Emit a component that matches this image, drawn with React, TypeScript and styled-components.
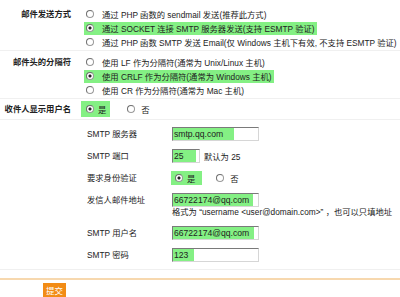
import styled, { createGlobalStyle } from "styled-components";

const GlobalStyle = createGlobalStyle`
  body {
    margin: 0;
    background: #ffffff;
    font-family: "Liberation Sans", "Noto Sans CJK SC", sans-serif;
    font-size: 8.3px;
    color: #222222;
  }
`;

const MARK = "#84f084";

const Page = styled.div`
  width: 400px;
  height: 297px;
  overflow: hidden;
`;

const Row = styled.div<{ $pad: string }>`
  display: grid;
  grid-template-columns: 84px 1fr;
  padding: ${(p) => p.$pad};
  border-bottom: 1px solid #f0f0f0;
`;

const Label = styled.div<{ $center?: boolean }>`
  font-weight: bold;
  text-align: right;
  padding-right: 13px;
  line-height: 14px;
  white-space: nowrap;
  align-self: ${(p) => (p.$center ? "center" : "start")};
`;

const OptionList = styled.div`
  display: flex;
  flex-direction: column;
`;

const Option = styled.div`
  display: flex;
  align-items: center;
  height: 14px;
  white-space: nowrap;
`;

const OptionBody = styled.span<{ $mark?: boolean }>`
  display: inline-flex;
  align-items: center;
  gap: 8px;
  height: 13px;
  padding: 0 2px;
  background: ${(p) => (p.$mark ? MARK : "transparent")};
`;

const Radio = styled.span<{ $on?: boolean }>`
  flex: none;
  width: 6px;
  height: 6px;
  border-radius: 50%;
  border: 1px solid #9a9a9a;
  border-top-color: #6f6f6f;
  border-left-color: #6f6f6f;
  background: ${(p) =>
    p.$on ? "radial-gradient(circle, #222 0 1.3px, #fff 1.8px)" : "#fff"};
`;

const YesNo = styled.div<{ $gap: number; $shift: number }>`
  display: flex;
  align-items: center;
  gap: ${(p) => p.$gap}px;
  margin-left: ${(p) => p.$shift}px;
  white-space: nowrap;
`;

const YesBox = styled.span<{ $pad: string; $h: number }>`
  display: inline-flex;
  align-items: center;
  gap: 4px;
  height: ${(p) => p.$h}px;
  padding: ${(p) => p.$pad};
  background: ${MARK};
`;

const NoItem = styled.span`
  display: inline-flex;
  align-items: center;
  gap: 6px;
`;

const SmtpSection = styled.div`
  padding: 3px 0 3px 87px;
  border-bottom: 1px solid #f0f0f0;
`;

const SmtpRow = styled.div`
  display: grid;
  grid-template-columns: 85px 1fr;
  padding: 4px 0;
`;

const SmtpLabel = styled.div`
  line-height: 14px;
  white-space: nowrap;
`;

const Field = styled.div`
  display: flex;
  align-items: center;
  gap: 4px;
  height: 14px;
  white-space: nowrap;
`;

const TextBox = styled.input<{ $w: number; $mark: number }>`
  box-sizing: border-box;
  width: ${(p) => p.$w}px;
  height: 14px;
  margin: 0;
  padding: 0 1px;
  font: inherit;
  font-size: 8.6px;
  color: #222;
  border: 1px solid #d6d6d6;
  border-top-color: #7a7a7a;
  border-left-color: #7a7a7a;
  outline: none;
  background: linear-gradient(
    to right,
    ${MARK} ${(p) => p.$mark}px,
    #ffffff ${(p) => p.$mark}px
  );
`;

const Help = styled.div`
  line-height: 11px;
  white-space: nowrap;
`;

const Footer = styled.div`
  padding-top: 8px;
`;

const OrangeRule = styled.div`
  border-top: 2px solid #f7d8ae;
`;

const Submit = styled.button`
  display: block;
  margin: 3px 0 0 43px;
  width: 23px;
  height: 17px;
  padding: 0;
  border: none;
  background: #f28c16;
  color: #ffffff;
  font: inherit;
  font-size: 8.5px;
  line-height: 17px;
`;

export default function App() {
  return (
    <Page>
      <GlobalStyle />
      <Row $pad="7px 0 1px">
        <Label>邮件发送方式</Label>
        <OptionList>
          <Option>
            <OptionBody>
              <Radio />
              通过 PHP 函数的 sendmail 发送(推荐此方式)
            </OptionBody>
          </Option>
          <Option>
            <OptionBody $mark>
              <Radio $on />
              通过 SOCKET 连接 SMTP 服务器发送(支持 ESMTP 验证)
            </OptionBody>
          </Option>
          <Option>
            <OptionBody>
              <Radio />
              通过 PHP 函数 SMTP 发送 Email(仅 Windows 主机下有效, 不支持 ESMTP 验证)
            </OptionBody>
          </Option>
        </OptionList>
      </Row>

      <Row $pad="4px 0 1px">
        <Label>邮件头的分隔符</Label>
        <OptionList>
          <Option>
            <OptionBody>
              <Radio />
              使用 LF 作为分隔符(通常为 Unix/Linux 主机)
            </OptionBody>
          </Option>
          <Option>
            <OptionBody $mark>
              <Radio $on />
              使用 CRLF 作为分隔符(通常为 Windows 主机)
            </OptionBody>
          </Option>
          <Option>
            <OptionBody>
              <Radio />
              使用 CR 作为分隔符(通常为 Mac 主机)
            </OptionBody>
          </Option>
        </OptionList>
      </Row>

      <Row $pad="2px 0">
        <Label $center>收件人显示用户名</Label>
        <YesNo $gap={17} $shift={-3}>
          <YesBox $pad="0 4px 0 5px" $h={16}>
            <Radio $on />是
          </YesBox>
          <NoItem>
            <Radio />否
          </NoItem>
        </YesNo>
      </Row>

      <SmtpSection>
        <SmtpRow>
          <SmtpLabel>SMTP 服务器</SmtpLabel>
          <Field>
            <TextBox $w={87} $mark={61} defaultValue="smtp.qq.com" readOnly />
          </Field>
        </SmtpRow>
        <SmtpRow>
          <SmtpLabel>SMTP 端口</SmtpLabel>
          <Field>
            <TextBox $w={28} $mark={23} defaultValue="25" readOnly />
            默认为 25
          </Field>
        </SmtpRow>
        <SmtpRow>
          <SmtpLabel>要求身份验证</SmtpLabel>
          <YesNo $gap={14} $shift={-1}>
            <YesBox $pad="0 7px 0 4px" $h={14}>
              <Radio $on />是
            </YesBox>
            <NoItem>
              <Radio />否
            </NoItem>
          </YesNo>
        </SmtpRow>
        <SmtpRow>
          <SmtpLabel>发信人邮件地址</SmtpLabel>
          <div>
            <Field>
              <TextBox $w={87} $mark={80} defaultValue="66722174@qq.com" readOnly />
            </Field>
            <Help>格式为 “username &lt;user@domain.com&gt;” ，也可以只填地址</Help>
          </div>
        </SmtpRow>
        <SmtpRow>
          <SmtpLabel>SMTP 用户名</SmtpLabel>
          <Field>
            <TextBox $w={87} $mark={81} defaultValue="66722174@qq.com" readOnly />
          </Field>
        </SmtpRow>
        <SmtpRow>
          <SmtpLabel>SMTP 密码</SmtpLabel>
          <Field>
            <TextBox $w={87} $mark={21} defaultValue="123" readOnly />
          </Field>
        </SmtpRow>
      </SmtpSection>

      <Footer>
        <OrangeRule />
        <Submit>提交</Submit>
      </Footer>
    </Page>
  );
}
